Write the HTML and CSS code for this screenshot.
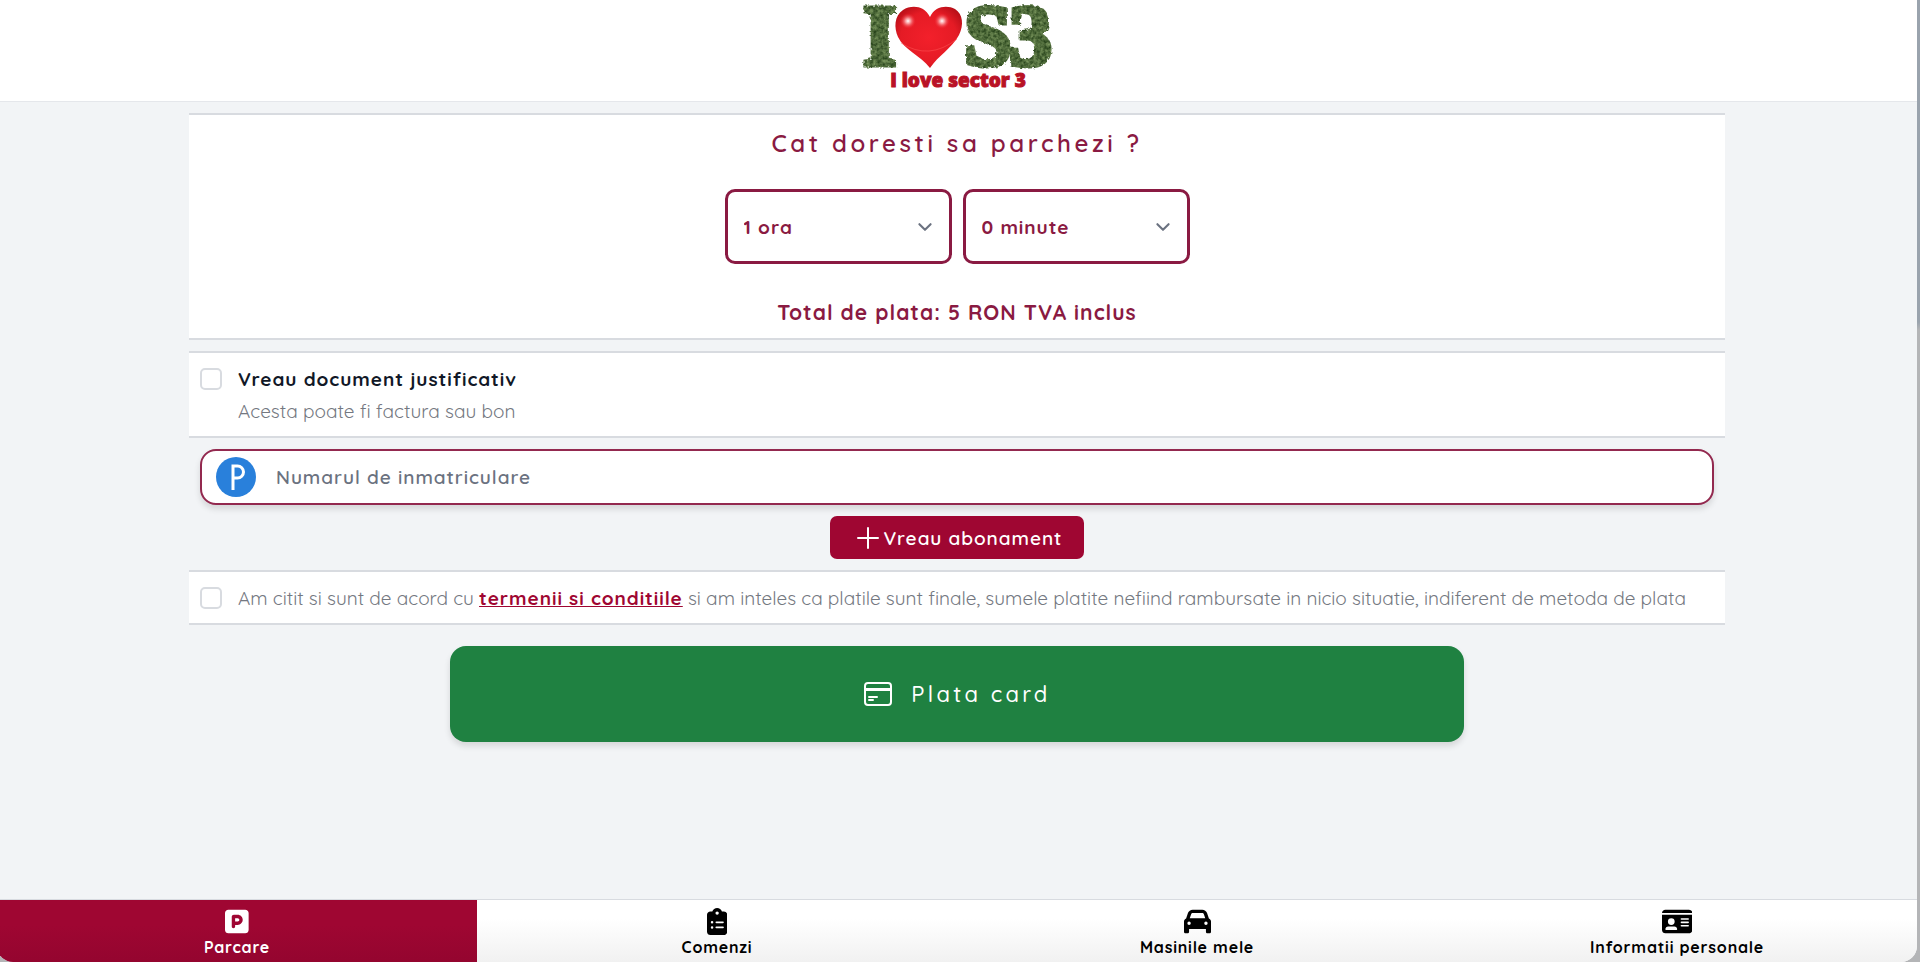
FILE: index.html
```html
<!DOCTYPE html>
<html lang="ro">
<head>
  <meta charset="UTF-8">
  <meta name="viewport" content="width=device-width, initial-scale=1.0">
  <title>Parcare Sector 3</title>
  <link rel="stylesheet" href="styles.css">
</head>
<body>
  <div class="page">
    <header class="header">
      <svg class="logo" viewBox="0 0 200 92" role="img" aria-label="I love sector 3">
        <defs>
          <filter id="leaves" x="-5%" y="-5%" width="110%" height="110%" color-interpolation-filters="sRGB">
            <feTurbulence type="fractalNoise" baseFrequency="0.3" numOctaves="3" seed="4" result="noise"/>
            <feDisplacementMap in="SourceGraphic" in2="noise" scale="4" result="rough"/>
            <feColorMatrix in="noise" type="matrix" values="0.5 0 0 0 0.06  0.5 0 0 0 0.17  0.4 0 0 0 0.03  0 0 0 0 1" result="green"/>
            <feComposite in="green" in2="rough" operator="in"/>
          </filter>
          <radialGradient id="heart" cx="50%" cy="50%" r="60%">
            <stop offset="0" stop-color="#f3202b"/>
            <stop offset="0.7" stop-color="#e51b25"/>
            <stop offset="1" stop-color="#b80f18"/>
          </radialGradient>
          <radialGradient id="shine">
            <stop offset="0" stop-color="#fff"/>
            <stop offset="0.3" stop-color="#ffc4c4" stop-opacity="0.8"/>
            <stop offset="1" stop-color="#f3202b" stop-opacity="0"/>
          </radialGradient>
        </defs>
        <g class="logo-leaves" filter="url(#leaves)">
          <text x="6" y="65">I</text>
          <text x="107" y="65">S</text>
          <text x="152" y="65">3</text>
        </g>
        <path fill="url(#heart)" d="M73 17C67 5 54 5 46 10c-9 6-9 18-5 27 6 13 22 18 32 31 8-12 22-20 29-33 5-10 4-21-4-26-8-4-20-3-25 8z"/>
        <circle cx="51" cy="21" r="8" fill="url(#shine)"/>
        <circle cx="85" cy="21" r="8" fill="url(#shine)"/>
        <path d="M44 43q28 18 56-4" fill="none" stroke="#ff5a5a" stroke-opacity="0.5"/>
        <text class="logo-name" x="101" y="87" text-anchor="middle">I love sector 3</text>
      </svg>
    </header>

    <main class="content">
      <section class="card duration">
        <h1 class="duration-title">Cat doresti sa parchezi ?</h1>
        <div class="selects">
          <select class="select" aria-label="Ore">
            <option>1 ora</option>
            <option>2 ore</option>
            <option>3 ore</option>
          </select>
          <select class="select" aria-label="Minute">
            <option>0 minute</option>
            <option>30 minute</option>
          </select>
        </div>
        <p class="total">Total de plata: 5 RON TVA inclus</p>
      </section>

      <section class="card option">
        <input class="checkbox" type="checkbox" id="document">
        <div>
          <label class="option-title" for="document">Vreau document justificativ</label>
          <p class="option-text">Acesta poate fi factura sau bon</p>
        </div>
      </section>

      <div class="plate">
        <svg class="plate-icon" viewBox="0 0 40 40" aria-hidden="true">
          <circle cx="20" cy="20" r="20" fill="#2980db"/>
          <path d="M17 33V9h4.500a6 6 0 0 1 0 12H17" fill="none" stroke="#fff" stroke-width="3"/>
        </svg>
        <input class="plate-input" type="text" placeholder="Numarul de inmatriculare" aria-label="Numarul de inmatriculare">
      </div>

      <button class="subscribe" type="button">
        <svg class="subscribe-icon" viewBox="0 0 24 24" aria-hidden="true"><path d="M12 2v20M2 12h20" fill="none" stroke="currentColor" stroke-width="2" stroke-linecap="round"/></svg>
        Vreau abonament
      </button>

      <section class="card option">
        <input class="checkbox" type="checkbox" id="terms">
        <label class="option-text" for="terms">Am citit si sunt de acord cu <a class="terms-link" href="#">termenii si conditiile</a> si am inteles ca platile sunt finale, sumele platite nefiind rambursate in nicio situatie, indiferent de metoda de plata</label>
      </section>

      <button class="pay" type="button">
        <svg class="pay-icon" viewBox="0 0 30 24" aria-hidden="true">
          <rect x="2" y="1" width="26" height="22" rx="3" fill="none" stroke="currentColor" stroke-width="2"/>
          <path d="M2 7.500h26" stroke="currentColor" stroke-width="3"/>
          <path d="M6 15h8M6 18h4" stroke="currentColor" stroke-width="2" stroke-linecap="round"/>
        </svg>
        Plata card
      </button>
    </main>

    <nav class="tabs">
      <a class="tab active" href="#">
        <svg class="tab-icon" viewBox="0 0 448 512" fill="currentColor" aria-hidden="true"><path d="M64 32C29 32 0 61 0 96v320c0 35 29 64 64 64h320c35 0 64-29 64-64V96c0-35-29-64-64-64zm128 224h48c18 0 32-14 32-32s-14-32-32-32h-48zm48 64h-48v32c0 18-14 32-32 32s-32-14-32-32V168c0-22 18-40 40-40h72c53 0 96 43 96 96s-43 96-96 96z"/></svg>
        Parcare
      </a>
      <a class="tab" href="#">
        <svg class="tab-icon" viewBox="0 0 384 512" fill="currentColor" aria-hidden="true"><path d="M192 0c-42 0-77 27-91 64H64C29 64 0 93 0 128v320c0 35 29 64 64 64h256c35 0 64-29 64-64V128c0-35-29-64-64-64h-37c-14-37-49-64-91-64zm0 64a32 32 0 1 1 0 64 32 32 0 1 1 0-64zM72 272a24 24 0 1 1 48 0 24 24 0 1 1-48 0zm104-16h128c9 0 16 7 16 16s-7 16-16 16H176c-9 0-16-7-16-16s7-16 16-16zM72 368a24 24 0 1 1 48 0 24 24 0 1 1-48 0zm88 0c0-9 7-16 16-16h128c9 0 16 7 16 16s-7 16-16 16H176c-9 0-16-7-16-16z"/></svg>
        Comenzi
      </a>
      <a class="tab" href="#">
        <svg class="tab-icon" viewBox="0 0 512 512" fill="currentColor" aria-hidden="true"><path d="M135 117l-26 75h294l-26-75c-5-13-17-21-30-21H165c-13 0-25 8-30 21zm-95 80l35-101c13-38 50-64 90-64h182c40 0 77 26 90 64l35 101c23 9 40 33 40 59v192c0 18-14 32-32 32h-32c-18 0-32-14-32-32v-48H96v48c0 18-14 32-32 32H32c-18 0-32-14-32-32V256c0-26 17-50 40-59zm88 91a32 32 0 1 0-64 0 32 32 0 1 0 64 0zm288 32a32 32 0 1 0 0-64 32 32 0 1 0 0 64z"/></svg>
        Masinile mele
      </a>
      <a class="tab" href="#">
        <svg class="tab-icon" viewBox="0 0 576 512" fill="currentColor" aria-hidden="true"><path d="M0 96h576c0-35-29-64-64-64H64C29 32 0 61 0 96zm0 32v288c0 35 29 64 64 64h448c35 0 64-29 64-64V128zm64 277c0-29 24-53 53-53h118c29 0 53 24 53 53 0 6-5 11-11 11H75c-6 0-11-5-11-11zm112-213a64 64 0 1 1 0 128 64 64 0 1 1 0-128zm176 16c0-9 7-16 16-16h128c9 0 16 7 16 16s-7 16-16 16H368c-9 0-16-7-16-16zm0 64c0-9 7-16 16-16h128c9 0 16 7 16 16s-7 16-16 16H368c-9 0-16-7-16-16zm0 64c0-9 7-16 16-16h128c9 0 16 7 16 16s-7 16-16 16H368c-9 0-16-7-16-16z"/></svg>
        Informatii personale
      </a>
    </nav>
  </div>
</body>
</html>
```
FILE: styles.css
```css
:root {
  --brand: #9f0632;
  --brand-text: #8a1a42;
  --green: #1f8141;
  --line: #d8dbe0;
  --muted: #747881;
}

* {
  box-sizing: border-box;
}

body {
  margin: 0;
  background: linear-gradient(#9aa3ad 322px, #b4b5b7 330px);
  font-family: Quicksand, Lato, sans-serif;
  font-size: 19px;
  line-height: 28px;
  overflow: hidden;
}

h1, p {
  margin: 0;
}

button, input, select {
  font: inherit;
}

.page {
  display: flex;
  flex-direction: column;
  min-height: 100vh;
  margin: 0 3px 0 -3px;
  background: #f2f4f6;
  border-radius: 0 0 16px 16px;
  overflow: hidden;
}

.header {
  display: flex;
  justify-content: center;
  height: 102px;
  background: #fff;
  border-bottom: 1px solid #e5e7eb;
}

.logo {
  width: 200px;
  height: 92px;
}

.logo-leaves {
  font: bold 86px "Liberation Serif", serif;
  stroke: #000;
  stroke-width: 5;
}

.logo-name {
  font: 800 19px "Open Sans", sans-serif;
  fill: #b91226;
  stroke: #b91226;
}

.content {
  display: flex;
  flex-direction: column;
  align-items: center;
  gap: 11px;
  flex: 1;
  width: 80%;
  margin: 0 auto;
  padding-top: 11px;
}

.card {
  width: 100%;
  background: #fff;
  border-top: 2px solid var(--line);
  border-bottom: 2px solid var(--line);
}

.duration {
  display: flex;
  flex-direction: column;
  align-items: center;
  color: var(--brand-text);
  padding: 10px 0 12px;
}

.duration-title {
  font-size: 24px;
  font-weight: 600;
  line-height: 36px;
  letter-spacing: 0.15em;
}

.selects {
  display: flex;
  gap: 11px;
  margin: 28px 0 34px;
}

.select {
  appearance: none;
  width: 227px;
  height: 75px;
  padding: 0 16px;
  color: var(--brand-text);
  font-weight: 700;
  letter-spacing: 0.05em;
  border: 3px solid var(--brand-text);
  border-radius: 10px;
  background: #fff url("data:image/svg+xml,%3Csvg xmlns='http://www.w3.org/2000/svg' fill='none' viewBox='0 0 20 20'%3E%3Cpath stroke='%236b7280' stroke-linecap='round' stroke-linejoin='round' stroke-width='1.5' d='M6 8l4 4 4-4'/%3E%3C/svg%3E") no-repeat right 10px center / 28px;
}

.total {
  font-size: 21px;
  font-weight: 700;
  letter-spacing: 0.05em;
}

.option {
  display: flex;
  gap: 16px;
  padding: 12px 11px 11px;
}

.checkbox {
  appearance: none;
  flex: none;
  width: 22px;
  height: 22px;
  margin: 3px 0;
  background: #fff;
  border: 2px solid var(--line);
  border-radius: 5px;
}

.checkbox:checked {
  background: var(--brand);
}

.option-title {
  color: #111827;
  font-weight: 700;
  letter-spacing: 0.05em;
}

.option-text {
  color: var(--muted);
}

.option-title + .option-text {
  margin-top: 4px;
}

.terms-link {
  color: var(--brand);
  font-weight: 700;
  letter-spacing: 0.05em;
}

.plate {
  display: flex;
  align-items: center;
  gap: 20px;
  width: calc(100% - 22px);
  height: 56px;
  padding: 0 14px;
  background: #fff;
  border: 2px solid #93294f;
  border-radius: 16px;
  box-shadow: 0 4px 6px rgba(0, 0, 0, 0.12);
}

.plate-icon {
  width: 40px;
  height: 40px;
}

.plate-input {
  flex: 1;
  padding: 0;
  border: 0;
  outline: 0;
  background: none;
  letter-spacing: 0.05em;
}

.plate-input::placeholder {
  color: #6b7280;
  font-weight: 600;
}

.subscribe {
  display: flex;
  align-items: center;
  justify-content: center;
  gap: 4px;
  height: 43px;
  padding: 0 22px 0 26px;
  color: #fff;
  background: var(--brand);
  border: 0;
  border-radius: 7px;
  font-weight: 600;
  letter-spacing: 0.05em;
}

.subscribe-icon {
  width: 24px;
  height: 24px;
}

.pay {
  display: flex;
  align-items: center;
  justify-content: center;
  gap: 18px;
  width: 66%;
  height: 96px;
  margin-top: 10px;
  color: #fff;
  background: var(--green);
  border: 0;
  border-radius: 16px;
  box-shadow: 0 4px 6px rgba(0, 0, 0, 0.12);
  font-size: 22px;
  font-weight: 500;
  letter-spacing: 0.15em;
}

.pay-icon {
  width: 30px;
  height: 24px;
}

.tabs {
  display: grid;
  grid-template-columns: repeat(4, 1fr);
  background: linear-gradient(#fff 30%, #f1f1f1);
  border-top: 1px solid var(--line);
}

.tab {
  display: flex;
  flex-direction: column;
  align-items: center;
  gap: 1px;
  padding: 8px 0 4px;
  color: #000;
  font-size: 16px;
  font-weight: 700;
  line-height: 22px;
  letter-spacing: 0.05em;
  text-decoration: none;
}

.tab.active {
  color: #fff;
  background: linear-gradient(var(--brand) 40%, #94052f);
}

.tab-icon {
  height: 27px;
}
```
